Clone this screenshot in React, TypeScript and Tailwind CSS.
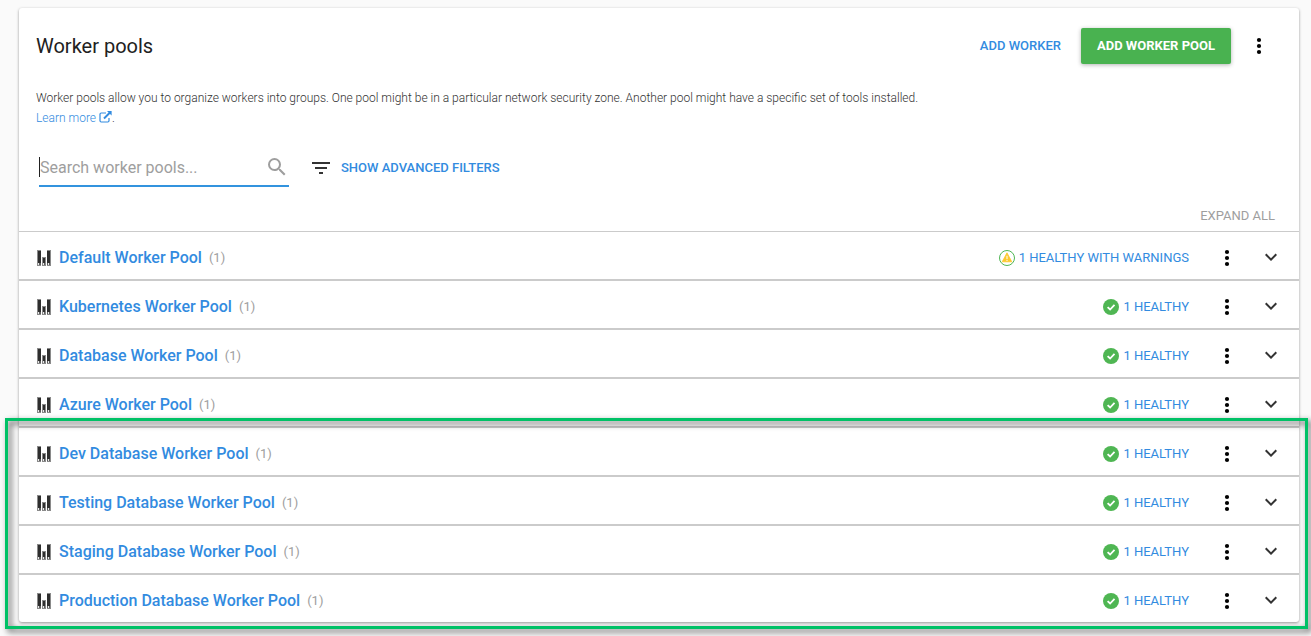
import React from "react";

type Pool = { name: string; count: number; status: string; warning?: boolean };

const pools: Pool[] = [
  { name: "Default Worker Pool", count: 1, status: "1 HEALTHY WITH WARNINGS", warning: true },
  { name: "Kubernetes Worker Pool", count: 1, status: "1 HEALTHY" },
  { name: "Database Worker Pool", count: 1, status: "1 HEALTHY" },
  { name: "Azure Worker Pool", count: 1, status: "1 HEALTHY" },
];

const databasePools: Pool[] = [
  { name: "Dev Database Worker Pool", count: 1, status: "1 HEALTHY" },
  { name: "Testing Database Worker Pool", count: 1, status: "1 HEALTHY" },
  { name: "Staging Database Worker Pool", count: 1, status: "1 HEALTHY" },
  { name: "Production Database Worker Pool", count: 1, status: "1 HEALTHY" },
];

function KebabIcon() {
  return (
    <svg width="24" height="24" viewBox="0 0 24 24" fill="#000" aria-hidden="true">
      <circle cx="12" cy="6" r="2.1" />
      <circle cx="12" cy="12" r="2.1" />
      <circle cx="12" cy="18" r="2.1" />
    </svg>
  );
}

function ChevronIcon() {
  return (
    <svg width="24" height="24" viewBox="0 0 24 24" fill="#333" aria-hidden="true">
      <path d="M7.41 7.59 12 12.17l4.59-4.58L18 9l-6 6-6-6 1.41-1.41z" />
    </svg>
  );
}

function PoolIcon() {
  return (
    <svg width="14" height="16" viewBox="0 0 14 16" shapeRendering="crispEdges" aria-hidden="true">
      <path fill="#8a8a8a" d="M0 0h4v16H0zM5 7h4v9H5zM10 0h4v16h-4z" />
      <path fill="#2e2e2e" d="M1 1h3v12H1zM6 8h2v5H6zM10 1h3v12h-3z" />
      <path fill="#5c5c5c" d="M1 13h3v2H1zM6 13h2v2H6zM10 13h3v2h-3z" />
      <path fill="#e8e8e8" d="M1 13h1v2H1zM6 13h1v2H6zM11 13h1v2h-1z" />
    </svg>
  );
}

function HealthyIcon() {
  return (
    <svg width="16" height="16" viewBox="0 0 16 16" aria-hidden="true">
      <circle cx="8" cy="8" r="8" fill="#4fb653" />
      <path d="M4.6 8.1 7.1 10.5 11.5 5.9" fill="none" stroke="#fff" strokeWidth="1.8" />
    </svg>
  );
}

function WarningIcon() {
  return (
    <svg width="16" height="16" viewBox="0 0 16 16" aria-hidden="true">
      <circle cx="8" cy="8" r="7.5" fill="#fff" stroke="#4fb653" />
      <path d="M8 2.8 12.8 11.8H3.2z" fill="#fbc92e" stroke="#fbc92e" strokeWidth=".8" strokeLinejoin="round" />
      <path d="M7.5 5.8h1v3.1h-1zM7.5 9.8h1v1.1h-1z" fill="#fff" />
    </svg>
  );
}

function PoolRow({ pool }: { pool: Pool }) {
  return (
    <li className="flex items-center pb-[9px] pl-[18px] pr-4 pt-[14px]">
      <PoolIcon />
      <a href="#" className="ml-2 text-base font-medium text-[#328be0]">
        {pool.name}
      </a>
      <span className="ml-[7px] text-[13px] text-[#9e9e9e]">({pool.count})</span>
      <a href="#" className="ml-auto flex items-center gap-1 text-[13px] text-[#328be0]">
        {pool.warning ? <WarningIcon /> : <HealthyIcon />}
        {pool.status}
      </a>
      <button type="button" aria-label={`Actions for ${pool.name}`} className="ml-[26px]">
        <KebabIcon />
      </button>
      <button type="button" aria-label={`Expand ${pool.name}`} className="ml-5">
        <ChevronIcon />
      </button>
    </li>
  );
}

function PoolList({ items }: { items: Pool[] }) {
  return (
    <ul className="divide-y-2 divide-[#cbcbcb]">
      {items.map((pool) => (
        <PoolRow key={pool.name} pool={pool} />
      ))}
    </ul>
  );
}

export default function App() {
  return (
    <main className="min-h-screen bg-[#fafafa] pb-[14px] pl-[19px] pr-3 pt-2 font-[Roboto,sans-serif]">
      <section className="rounded-[3px] bg-white shadow-[0_1px_3px_rgba(0,0,0,0.4)]">
        <header className="flex items-center pl-[17px] pr-7 pt-5">
          <h1 className="text-xl text-[#212121]">Worker pools</h1>
          <button type="button" className="ml-auto text-[13px] font-medium text-[#328be0]">
            ADD WORKER
          </button>
          <button
            type="button"
            className="ml-5 h-9 rounded-[2px] bg-[#49b250] px-4 text-[13px] font-bold text-white shadow-[0_1px_4px_rgba(0,0,0,0.3)]"
          >
            ADD WORKER POOL
          </button>
          <button type="button" aria-label="More actions" className="ml-4">
            <KebabIcon />
          </button>
        </header>

        <p className="mt-6 px-[17px] text-xs font-light leading-5 text-[#333]">
          Worker pools allow you to organize workers into groups. One pool might be in a particular network security
          zone. Another pool might have a specific set of tools installed.
          <br />
          <a href="#" className="text-[#328be0]">
            Learn more{" "}
            <svg width="13" height="12" viewBox="0 0 13 12" className="inline-block align-[-1px]" aria-hidden="true">
              <path
                d="M7 2H2.2Q1 2 1 3.2v6.6Q1 11 2.2 11h6.6Q10 11 10 9.8V7"
                fill="none"
                stroke="#328be0"
                strokeWidth="1.2"
              />
              <path d="M5 7.5 11 1.5" stroke="#328be0" strokeWidth="2" />
              <path d="M8 0h4.6v4.6z" fill="#328be0" />
            </svg>
          </a>
          .
        </p>

        <div className="mt-5 flex items-center pl-5">
          <div className="flex h-[39px] w-[250px] items-center border-b-2 border-[#3293de]">
            <span className="h-5 w-px bg-[#212121]" aria-hidden="true" />
            <input
              type="text"
              autoFocus
              aria-label="Search worker pools"
              placeholder="Search worker pools..."
              className="min-w-0 flex-1 bg-transparent pt-0.5 text-base text-[#212121] caret-transparent outline-none placeholder:text-[#9e9e9e]"
            />
            <svg width="24" height="24" viewBox="0 0 24 24" fill="#9e9e9e" aria-hidden="true">
              <path d="M15.5 14h-.79l-.28-.27A6.47 6.47 0 0 0 16 9.5 6.5 6.5 0 1 0 9.5 16c1.61 0 3.09-.59 4.23-1.57l.27.28v.79l5 4.99L20.49 19l-4.99-5zm-6 0C7.01 14 5 11.99 5 9.5S7.01 5 9.5 5 14 7.01 14 9.5 11.99 14 9.5 14z" />
            </svg>
          </div>
          <button type="button" className="ml-5 flex items-center gap-2 text-[13px] font-medium text-[#328be0]">
            <svg width="24" height="24" viewBox="0 0 24 24" fill="#333" aria-hidden="true">
              <path d="M10 18h4v-2h-4v2zM3 6v2h18V6H3zm3 7h12v-2H6v2z" />
            </svg>
            SHOW ADVANCED FILTERS
          </button>
        </div>

        <div className="flex h-[45px] items-end justify-end border-b border-[#cbcbcb] pb-[5px] pr-6">
          <button type="button" className="text-[13px] leading-5 text-[#9e9e9e]">
            EXPAND ALL
          </button>
        </div>

        <PoolList items={pools} />
        <div className="relative border-t-2 border-[#cbcbcb]">
          <PoolList items={databasePools} />
          <div className="pointer-events-none absolute -bottom-[7px] -left-[14px] -right-[9px] -top-[10px] border-[3px] border-[#00c166] drop-shadow-[3px_3px_3px_rgba(0,0,0,0.7)]" />
        </div>
      </section>
    </main>
  );
}
